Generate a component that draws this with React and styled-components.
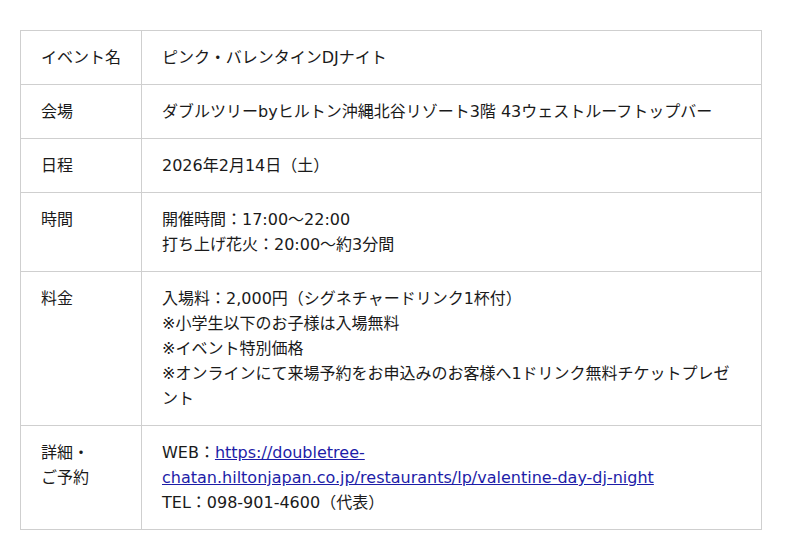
import styled, { createGlobalStyle } from "styled-components";

const GlobalStyle = createGlobalStyle`
  body {
    margin: 0;
    background: #fff;
  }
`;

const rows = [
  { label: "イベント名", lines: ["ピンク・バレンタインDJナイト"] },
  {
    label: "会場",
    lines: ["ダブルツリーbyヒルトン沖縄北谷リゾート3階 43ウェストルーフトップバー"],
  },
  { label: "日程", lines: ["2026年2月14日（土）"] },
  { label: "時間", lines: ["開催時間：17:00〜22:00", "打ち上げ花火：20:00〜約3分間"] },
  {
    label: "料金",
    lines: [
      "入場料：2,000円（シグネチャードリンク1杯付）",
      "※小学生以下のお子様は入場無料",
      "※イベント特別価格",
      "※オンラインにて来場予約をお申込みのお客様へ1ドリンク無料チケットプレゼント",
    ],
  },
];

const url =
  "https://doubletree-chatan.hiltonjapan.co.jp/restaurants/lp/valentine-day-dj-night";

export default function App() {
  return (
    <Page>
      <GlobalStyle />
      <InfoTable>
        <tbody>
          {rows.map((row) => (
            <tr key={row.label}>
              <Label>{row.label}</Label>
              <Value>
                {row.lines.map((line, i) => (
                  <Line key={i}>{line}</Line>
                ))}
              </Value>
            </tr>
          ))}
          <tr>
            <Label>
              詳細・
              <br />
              ご予約
            </Label>
            <Value>
              <Line>
                WEB：<Link href={url}>{url}</Link>
              </Line>
              <Line>TEL：098-901-4600（代表）</Line>
            </Value>
          </tr>
        </tbody>
      </InfoTable>
    </Page>
  );
}

const Page = styled.div`
  padding: 30px 38px 30px 20px;
  font-family: "DejaVu Sans", "Noto Sans CJK JP", sans-serif;
  font-size: 16px;
  line-height: 25px;
  color: #1a1a1a;
`;

const InfoTable = styled.table`
  width: 742px;
  border-collapse: collapse;
  table-layout: fixed;
`;

const Cell = styled.td`
  border: 1px solid #cfcfcf;
  padding: 14px 20px;
  vertical-align: top;
  text-align: left;
`;

const Label = styled(Cell)`
  width: 80px;
  font-weight: normal;
`;

const Value = styled(Cell)`
  word-break: normal;
  overflow-wrap: anywhere;
`;

const Line = styled.div``;

const Link = styled.a`
  color: #1d1da8;
  text-decoration: underline;
`;
